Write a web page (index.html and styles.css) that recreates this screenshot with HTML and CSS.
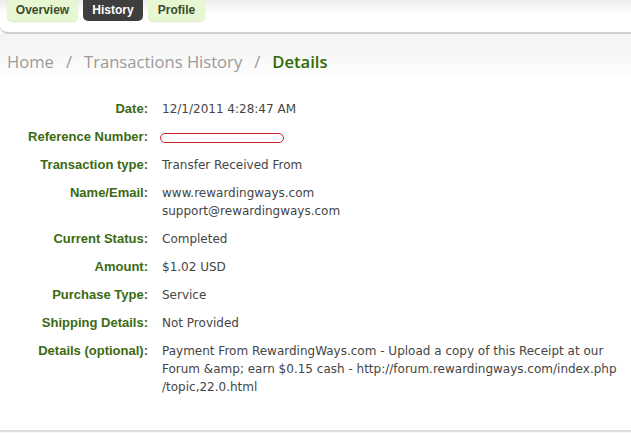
FILE: index.html
```html
<!DOCTYPE html>
<html>
<head>
<meta charset="utf-8">
<link rel="stylesheet" href="styles.css">
</head>
<body>
<div class="topbar">
  <nav class="tabs">
    <a class="tab">Overview</a>
    <a class="tab active">History</a>
    <a class="tab">Profile</a>
  </nav>
</div>
<div class="crumbs">
  <span>Home</span><span class="sep">/</span><span>Transactions History</span><span class="sep">/</span><span class="cur">Details</span>
</div>
<div class="content">
  <dl class="details">
    <dt>Date:</dt><dd>12/1/2011 4:28:47 AM</dd>
    <dt>Reference Number:</dt><dd><span class="redact"></span></dd>
    <dt>Transaction type:</dt><dd>Transfer Received From</dd>
    <dt>Name/Email:</dt><dd>www.rewardingways.com<br>support@rewardingways.com</dd>
    <dt>Current Status:</dt><dd>Completed</dd>
    <dt>Amount:</dt><dd>$1.02 USD</dd>
    <dt>Purchase Type:</dt><dd>Service</dd>
    <dt>Shipping Details:</dt><dd>Not Provided</dd>
    <dt>Details (optional):</dt><dd>Payment From RewardingWays.com - Upload a copy of this Receipt at our<br>Forum &amp;amp; earn $0.15 cash - http://forum.rewardingways.com/index.php<br>/topic,22.0.html</dd>
  </dl>
</div>
<div class="footer"></div>
</body>
</html>
```
FILE: styles.css
```css
html, body { margin: 0; padding: 0; }
body {
  width: 631px;
  height: 433px;
  overflow: hidden;
  background: #ffffff;
  font-family: "DejaVu Sans", sans-serif;
}
.topbar {
  height: 32px;
  background: linear-gradient(#ececec 0, #fafafa 10px, #ffffff 14px);
  border-bottom: 2px solid #cfcfcf;
  border-bottom-left-radius: 8px;
  box-shadow: 0 1px 1px #e6e6e6;
}
.tabs {
  display: flex;
  gap: 5px;
  padding-left: 7px;
}
.tab {
  display: block;
  height: 21px;
  line-height: 21px;
  padding: 0 8px;
  background: #e7f7d2;
  color: #3c4a2e;
  font-family: "Liberation Sans", Arial, sans-serif;
  font-weight: bold;
  font-size: 12px;
  text-align: center;
  border-radius: 0 0 5px 5px;
  box-shadow: 0 1px 1px #d8e8c4;
}
.tab:nth-child(1) { width: 55px; }
.tab.active {
  background: #3e3e3e;
  color: #ffffff;
  box-shadow: none;
  width: 44px;
}
.tab:nth-child(3) { width: 41px; }
.crumbs {
  height: 44px;
  padding-left: 7px;
  background: linear-gradient(#f4f4f4 0, #f7f7f7 20px, #ffffff 46px);
  font-family: "Open Sans", sans-serif;
  font-size: 16.6px;
  color: #9a9a9a;
  line-height: 56px;
}
.crumbs .sep { margin: 0 12px; }
.crumbs .cur { color: #2f6a07; font-weight: 600; }
.content {
  height: 349px;
  padding-top: 3px;
}
.details {
  display: grid;
  grid-template-columns: 148px 1fr;
  column-gap: 14px;
  row-gap: 10px;
  margin: 0;
  padding-top: 19px;
}
.details dt {
  text-align: right;
  font-family: "Liberation Sans", Arial, sans-serif;
  font-weight: bold;
  font-size: 13px;
  line-height: 18px;
  color: #3b6a12;
}
.details dd {
  margin: 0;
  font-family: "DejaVu Sans", sans-serif;
  font-size: 12px;
  line-height: 18px;
  color: #454545;
  white-space: nowrap;
}
.redact {
  display: inline-block;
  width: 122px;
  height: 8px;
  border: 1px solid #c8202a;
  border-radius: 6px;
  vertical-align: middle;
  margin-left: -2px;
}
.footer {
  height: 6px;
  border-top: 2px solid #dedede;
  background: #f7f7f7;
}
```
